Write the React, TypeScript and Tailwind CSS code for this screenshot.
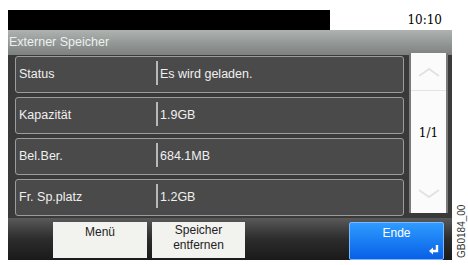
import React from "react";

const rows = [
  { label: "Status", value: "Es wird geladen." },
  { label: "Kapazität", value: "1.9GB" },
  { label: "Bel.Ber.", value: "684.1MB" },
  { label: "Fr. Sp.platz", value: "1.2GB" },
];

export default function App() {
  return (
    <div
      className="relative w-[468px] h-[265px] bg-white overflow-hidden"
      style={{ fontFamily: '"Liberation Sans", Arial, sans-serif' }}
    >
      <div className="absolute left-[8px] top-[10px] w-[444px] flex flex-col">
        {/* top status */}
        <div className="flex h-[20px]">
          <div className="w-[322px] bg-black" />
          <div className="flex-1 flex items-center justify-end pr-[10px] text-[12px] text-black" style={{ fontFamily: '"DejaVu Serif", serif' }}>
            10:10
          </div>
        </div>
        {/* title */}
        <div className="h-[25px] bg-gradient-to-b from-[#aeb2b0] to-[#7c807e] flex items-center pl-[1px] text-[12.5px] text-[#eef0ee]">
          Externer Speicher
        </div>
        {/* main */}
        <div className="h-[163px] bg-[#3a3a3a] flex">
          <div className="w-[7px]" />
          <div className="w-[389px] flex flex-col gap-[4px] py-[1px]">
            {rows.map((r) => (
              <div
                key={r.label}
                className="h-[37px] bg-[#4a4a4a] border border-[#9c9c9c] rounded-[3px] flex items-center text-[12.5px] text-[#f0f0f0]"
              >
                <div className="w-[140px] pl-[3px]">{r.label}</div>
                <div className="w-[2px] h-[24px] bg-[#b8b8b8] mb-[4px]" />
                <div className="pl-[2px]">{r.value}</div>
              </div>
            ))}
          </div>
          <div className="flex-1 pl-[5px] pr-[4px] flex flex-col">
            <div className="h-[160px] -mt-[2px] bg-[#fbfbfb] border-x-2 border-[#7a7a7a] flex flex-col">
              <div className="h-[38px] flex items-center justify-center border-b border-[#e4e4e4]">
                <svg width="24" height="10" viewBox="0 0 24 10">
                  <path d="M2 9 L12 2 L22 9" fill="none" stroke="#e2e2e2" strokeWidth="2" />
                </svg>
              </div>
              <div className="flex-1 flex items-center justify-center text-[12px] text-black" style={{ fontFamily: '"DejaVu Serif", serif' }}>
                1/1
              </div>
              <div className="h-[38px] flex items-center justify-center">
                <svg width="24" height="10" viewBox="0 0 24 10">
                  <path d="M2 1 L12 8 L22 1" fill="none" stroke="#e2e2e2" strokeWidth="2" />
                </svg>
              </div>
            </div>
          </div>
        </div>
        {/* bottom */}
        <div className="h-[42px] bg-gradient-to-b from-[#5a5a5a] via-[#2c2c2c] to-[#1a1a1a] flex items-start pt-[4px]">
          <div className="w-[45px]" />
          <div className="w-[94px] h-[36px] bg-[#f2f2ee] flex justify-center pt-[1px] text-[12px] text-[#222]">
            Menü
          </div>
          <div className="w-[5px]" />
          <div className="w-[93px] h-[36px] bg-[#f2f2ee] flex flex-col items-center leading-[15px] pt-[1px] text-[12px] text-[#222]">
            <span>Speicher</span>
            <span>entfernen</span>
          </div>
          <div className="w-[104px]" />
          <div className="relative w-[95px] h-[38px] rounded-[2px] border border-[#7ab8ff] bg-gradient-to-b from-[#2f9bff] to-[#0a5fe6] flex justify-center pt-[1px] text-[12px] text-white">
            Ende
            <svg className="absolute right-[3px] bottom-[3px]" width="12" height="12" viewBox="0 0 12 12">
              <path d="M9 1 V7 H4" fill="none" stroke="white" strokeWidth="2.4" />
              <path d="M1 7 L5 3.5 V10.5 Z" fill="white" />
            </svg>
          </div>
        </div>
      </div>
      <div
        className="absolute left-[454px] top-[258px] origin-top-left -rotate-90 text-[10px] text-[#333] whitespace-nowrap"
      >
        GB0184_00
      </div>
    </div>
  );
}
